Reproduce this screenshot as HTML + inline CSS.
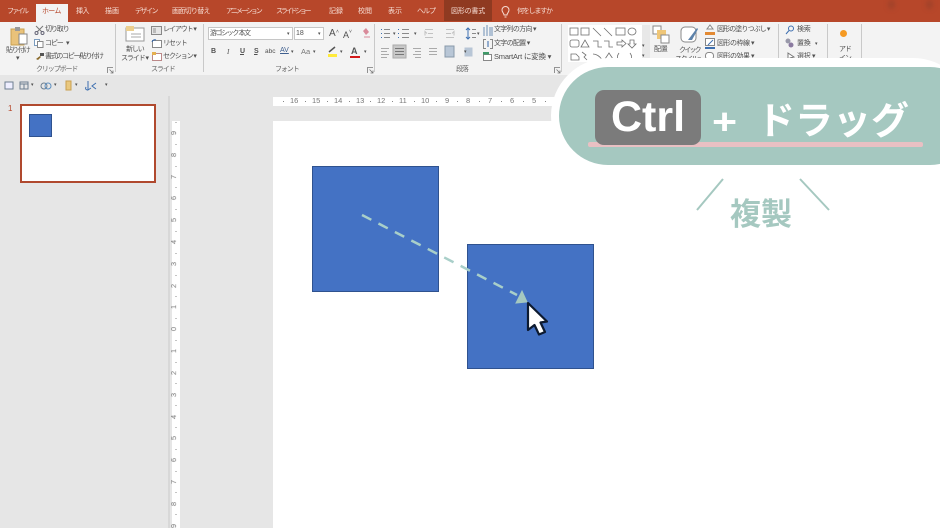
<!DOCTYPE html>
<html lang="ja"><head><meta charset="utf-8"><style>
html,body{margin:0;padding:0}
body{width:940px;height:528px;overflow:hidden;position:relative;background:#e6e6e6;font-family:"Liberation Sans","Noto Sans CJK JP",sans-serif}
div,span,svg{position:absolute}
.t{white-space:nowrap;font-size:7px;letter-spacing:-1.100px;line-height:10px;color:#505050;filter:blur(.3px)}
.l{letter-spacing:0}
.tab{color:#f6dcd3;top:7px}
.sep{width:1px;top:24px;height:48px;background:#c9c9c9}
.g{color:#666;top:65px;font-size:7px}
.r{color:#777;font-size:7.500px;line-height:8px;filter:blur(.3px)}
.o{white-space:nowrap;color:#fff;font-weight:bold}
</style></head><body>
<div style="left:0;top:0;width:940px;height:22px;background:#b7472a"></div>
<div style="left:36px;top:4px;width:32px;height:18px;background:#f3f3f3"></div>
<div style="left:444px;top:0;width:48px;height:21px;background:#8f3a21"></div>
<div style="left:0;top:22px;width:940px;height:53px;background:#f3f3f3"></div>
<div style="left:888px;top:0;width:7px;height:9px;background:#a3432a;border-radius:3px;filter:blur(2px)"></div>
<div style="left:926px;top:0;width:7px;height:9px;background:#a3432a;border-radius:3px;filter:blur(2px)"></div>

<span class="t tab" style="left:7px;letter-spacing:-2px">ファイル</span>
<span class="t tab" style="left:42px;color:#b7472a;letter-spacing:-.7px">ホーム</span>
<span class="t tab" style="left:76px;letter-spacing:-.5px">挿入</span>
<span class="t tab" style="left:105px;letter-spacing:0">描画</span>
<span class="t tab" style="left:135px;letter-spacing:-1.500px">デザイン</span>
<span class="t tab" style="left:172px;letter-spacing:-.7px">画面切り替え</span>
<span class="t tab" style="left:226px;letter-spacing:-2px">アニメーション</span>
<span class="t tab" style="left:276px;letter-spacing:-2.200px">スライド ショー</span>
<span class="t tab" style="left:329px;letter-spacing:0">記録</span>
<span class="t tab" style="left:358px;letter-spacing:0">校閲</span>
<span class="t tab" style="left:388px;letter-spacing:0">表示</span>
<span class="t tab" style="left:417px;letter-spacing:-1px">ヘルプ</span>
<span class="t tab" style="left:451px;letter-spacing:-.2px">図形の書式</span>
<span class="t tab" style="left:517px;letter-spacing:-1.200px">何をしますか</span>
<svg style="left:501px;top:6px" width="9" height="12" viewBox="0 0 9 12"><path d="M3 9C3 7 1 6.500 1 4a3.500 3.500 0 0 1 7 0C8 6.500 6 7 6 9ZM3.500 11h2" fill="none" stroke="#f6dcd3"/></svg>

<div class="sep" style="left:115px"></div><div class="sep" style="left:203px"></div><div class="sep" style="left:374px"></div><div class="sep" style="left:561px"></div><div class="sep" style="left:778px;height:36px"></div><div class="sep" style="left:827px;height:36px"></div><div class="sep" style="left:861px;height:36px"></div>

<!-- clipboard -->
<svg style="left:10px;top:26px" width="20" height="20" viewBox="0 0 20 20"><rect x="1" y="3" width="13" height="16" fill="#e9c27a" stroke="#c9a050"/><rect x="5" y="1" width="5" height="4" fill="#999"/><path d="M9 8h8v10H9z" fill="#fff" stroke="#888"/></svg>
<span class="t" style="left:6px;top:46px">貼り付け</span>
<span class="t" style="left:16px;top:54px">▾</span>
<svg style="left:34px;top:25px" width="11" height="10" viewBox="0 0 11 10"><path d="M2 1l6 6M9 1L3 7" stroke="#777" fill="none"/><circle cx="2.500" cy="8" r="1.500" fill="none" stroke="#667"/><circle cx="8.500" cy="8" r="1.500" fill="none" stroke="#667"/></svg>
<span class="t" style="left:45px;top:25px">切り取り</span>
<svg style="left:34px;top:39px" width="10" height="9" viewBox="0 0 10 9"><rect x=".5" y=".5" width="5" height="6" fill="#fff" stroke="#7a9cc0"/><rect x="3.500" y="2.500" width="5.500" height="6" fill="#fff" stroke="#888"/></svg>
<span class="t" style="left:45px;top:39px">コピー</span><span class="t" style="left:66px;top:39px">▾</span>
<svg style="left:35px;top:52px" width="10" height="9" viewBox="0 0 10 9"><path d="M1 7l4-3 1 1-3 3z" fill="#8a6a2a"/><rect x="5" y="1" width="4" height="3" fill="#555"/></svg>
<span class="t" style="left:45px;top:52px;letter-spacing:-1.300px">書式のコピー/貼り付け</span>
<span class="t g" style="left:36px">クリップボード</span>
<svg style="left:107px;top:67px" width="7" height="7" viewBox="0 0 7 7"><path d="M.5 6V.5H6M2.500 2.500L6 6M3.500 6H6V3.500" fill="none" stroke="#777" stroke-width=".8"/></svg>

<!-- slide group -->
<svg style="left:125px;top:25px" width="20" height="17" viewBox="0 0 20 17"><rect x="1" y="3" width="18" height="13" fill="#fff" stroke="#999"/><rect x="1" y="1" width="8" height="5" fill="#eccf8f"/><path d="M6 9h10M6 12h10" stroke="#aaa"/></svg>
<span class="t" style="left:126px;top:45px">新しい</span>
<span class="t" style="left:121px;top:54px">スライド ▾</span>
<svg style="left:151px;top:26px" width="11" height="9" viewBox="0 0 11 9"><rect x=".5" y=".5" width="10" height="8" fill="#e6e6e6" stroke="#888"/><rect x="2" y="2" width="3" height="5" fill="#bbb"/></svg>
<span class="t" style="left:163px;top:25px">レイアウト ▾</span>
<svg style="left:151px;top:39px" width="11" height="9" viewBox="0 0 11 9"><rect x="1.500" y="1.500" width="9" height="7" fill="#fff" stroke="#888"/><path d="M1 3a3 3 0 0 1 4-2" fill="none" stroke="#36a"/></svg>
<span class="t" style="left:163px;top:39px">リセット</span>
<svg style="left:152px;top:52px" width="10" height="9" viewBox="0 0 10 9"><rect x=".5" y="1.500" width="9" height="7" fill="#fff" stroke="#b88"/><rect x="0" y="0" width="4" height="3" fill="#e5b04f"/></svg>
<span class="t" style="left:163px;top:52px">セクション ▾</span>
<span class="t g" style="left:151px">スライド</span>

<!-- font -->
<div style="left:208px;top:27px;width:85px;height:13px;background:#fff;border:1px solid #c6c6c6;box-sizing:border-box"></div>
<span class="t" style="left:210px;top:29px;letter-spacing:-1.400px">游ゴシック 本文</span>
<span class="t" style="left:287px;top:29px;font-size:5px">▾</span>
<div style="left:294px;top:27px;width:30px;height:13px;background:#fff;border:1px solid #c6c6c6;box-sizing:border-box"></div>
<span class="t l" style="left:296px;top:29px">18</span>
<span class="t" style="left:318px;top:29px;font-size:5px">▾</span>
<span class="t" style="left:329px;top:29px;font-size:10px">A</span><span class="t" style="left:336px;top:27px;font-size:5px">˄</span>
<span class="t" style="left:343px;top:30px;font-size:9px">A</span><span class="t" style="left:349px;top:27px;font-size:5px">˅</span>
<svg style="left:361px;top:27px" width="10" height="12" viewBox="0 0 10 12"><path d="M2 4l3-3 3 4-3 3z" fill="#d98a9a"/><path d="M3 10h6" stroke="#d98a9a"/></svg>
<span class="t" style="left:211px;top:47px;font-weight:bold;font-family:'Liberation Sans'">B</span>
<span class="t" style="left:227px;top:47px;font-style:italic;font-family:'Liberation Serif'">I</span>
<span class="t" style="left:240px;top:47px;text-decoration:underline;font-weight:bold">U</span>
<span class="t" style="left:254px;top:47px;text-decoration:underline;font-weight:bold">S</span>
<span class="t l" style="left:265px;top:47px;font-size:6.500px">abc</span>
<span class="t l" style="left:280px;top:46px;color:#3f5f8f;text-decoration:underline">AV</span><span class="t" style="left:291px;top:47px;font-size:5px">▾</span>
<span class="t l" style="left:301px;top:47px;font-size:7.500px;color:#777">Aa</span><span class="t" style="left:313px;top:47px;font-size:5px">▾</span>
<svg style="left:327px;top:45px" width="11" height="13" viewBox="0 0 11 13"><path d="M2 7l6-5" stroke="#555" stroke-width="1.500"/><rect x="1" y="9" width="9" height="3" fill="#ffea3b"/></svg>
<span class="t" style="left:340px;top:47px;font-size:5px">▾</span>
<span class="t" style="left:351px;top:46px;font-size:9px;font-weight:bold;color:#555">A</span><div style="left:350px;top:56px;width:10px;height:2px;background:#d21818"></div>
<span class="t" style="left:364px;top:47px;font-size:5px">▾</span>
<span class="t g" style="left:275px">フォント</span>
<svg style="left:367px;top:67px" width="7" height="7" viewBox="0 0 7 7"><path d="M.5 6V.5H6M2.500 2.500L6 6M3.500 6H6V3.500" fill="none" stroke="#777" stroke-width=".8"/></svg>

<!-- paragraph -->
<svg style="left:380px;top:26px" width="180" height="34" viewBox="0 0 180 34" fill="none" stroke="#8a8a8a">
<path d="M1 3.500h1M1 7.500h1M1 11.500h1" stroke="#3d6fb0"/><path d="M4 3.500h6M4 7.500h6M4 11.500h6"/>
<path d="M18 3.500h1M18 7.500h1M18 11.500h1" stroke="#3d6fb0"/><path d="M22 3.500h7M22 7.500h7M22 11.500h7"/>
<path d="M45 3.500h8M48 7.500h5M45 11.500h8M47 7.500l-2-2v4" stroke="#c2c2c2"/>
<path d="M66 3.500h8M66 7.500h5M66 11.500h8M72 7.500l2-2v4" stroke="#c2c2c2"/>
<path d="M88 2v11M86 4l2-2 2 2M86 11l2 2 2-2" stroke="#3d6fb0"/><path d="M92 3.500h4M92 7.500h4M92 11.500h4"/>
<path d="M1 22.500h8M1 25.500h6M1 28.500h8M1 31.500h6" stroke="#aaa"/>
<rect x="13" y="19" width="13" height="13" fill="#c8c8c8" stroke="#aaa"/><path d="M15 22.500h9M15 25.500h9M15 28.500h9" stroke="#777"/>
<path d="M33 22.500h8M35 25.500h6M33 28.500h8M35 31.500h6" stroke="#aaa"/>
<path d="M49 22.500h8M49 25.500h8M49 28.500h8" stroke="#aaa"/>
<path d="M65 20h9v11h-9z" fill="#b8c6d6" stroke="#8899aa"/>
<path d="M85 22h7v8h-7z" fill="#b8c6d6" stroke="#b8c6d6"/>
</svg>
<span class="t" style="left:393px;top:29px;font-size:5px">▾</span><span class="t" style="left:414px;top:29px;font-size:5px">▾</span><span class="t" style="left:477px;top:29px;font-size:5px">▾</span><span class="t" style="left:464px;top:47px;font-size:5px">▾</span>
<svg style="left:483px;top:25px" width="10" height="11" viewBox="0 0 10 11" fill="none" stroke="#6d8fb5"><path d="M1 2v9M4 0v11M7 2v9M9 2v9"/></svg>
<span class="t" style="left:494px;top:25px;letter-spacing:-.7px">文字列の方向 ▾</span>
<svg style="left:483px;top:39px" width="10" height="10" viewBox="0 0 10 10" fill="none" stroke="#888"><path d="M3 .5H.5v9H3M7 .5h2.500v9H7"/><path d="M5 2v6" stroke="#36a"/></svg>
<span class="t" style="left:494px;top:39px;letter-spacing:-.7px">文字の配置 ▾</span>
<svg style="left:483px;top:51px" width="10" height="10" viewBox="0 0 10 10"><rect x=".5" y="3.500" width="8" height="6" fill="#fff" stroke="#888"/><rect x="0" y="1" width="6" height="2.500" fill="#3e9a68"/></svg>
<span class="t" style="left:494px;top:52px;font-size:7.500px;letter-spacing:-.2px">SmartArt に変換 ▾</span>
<span class="t g" style="left:456px">段落</span>
<svg style="left:554px;top:67px" width="7" height="7" viewBox="0 0 7 7"><path d="M.5 6V.5H6M2.500 2.500L6 6M3.500 6H6V3.500" fill="none" stroke="#777" stroke-width=".8"/></svg>

<!-- shapes -->
<div style="left:568px;top:25px;width:74px;height:37px;background:#fff"></div>
<svg style="left:568px;top:25px" width="74" height="37" viewBox="0 0 74 37" fill="none" stroke="#707070" stroke-width=".8">
<rect x="2" y="3" width="8" height="7"/><rect x="13" y="3" width="8" height="7"/><path d="M25 3l8 8M36 3l8 8"/><rect x="48" y="3" width="9" height="7"/><ellipse cx="64" cy="6.500" rx="4" ry="3.500"/>
<rect x="2" y="15" width="9" height="7" rx="2"/><path d="M13 22l4-7 4 7zM25 16h5v6h4M36 16h5v6h4M49 17h5v-2l4 3.500-4 3.500v-2h-5zM62 15h4v4h2l-4 4-4-4h2z"/>
<path d="M3 29h5l3 3v3H3zM14 27l4 3-2 2 3 3M25 29c3 0 7 2 9 6M37 34l4-6 4 6M51 28c-2 3-2 4-1 7M62 28c2 3 2 4 1 7"/></svg>
<div style="left:642px;top:25px;width:8px;height:37px;background:#e8e8e8"></div>
<span class="t" style="left:642px;top:41px;font-size:5px">▾</span><span class="t" style="left:642px;top:51px;font-size:5px">▾</span>

<svg style="left:652px;top:25px" width="20" height="20" viewBox="0 0 20 20"><rect x="1" y="1" width="8" height="8" fill="#fff" stroke="#888"/><rect x="5" y="5" width="9" height="9" fill="#efc677"/><rect x="9" y="10" width="8" height="8" fill="#fff" stroke="#888"/></svg>
<span class="t" style="left:654px;top:45px;letter-spacing:-.2px">配置</span>
<svg style="left:680px;top:25px" width="20" height="20" viewBox="0 0 20 20"><rect x="1" y="2" width="15" height="15" rx="4" fill="#fff" stroke="#888"/><path d="M8 15l9-12 1 1-6 11z" fill="#5d82aa"/></svg>
<span class="t" style="left:679px;top:46px;letter-spacing:-1.800px">クイック</span>
<span class="t" style="left:675px;top:55px;letter-spacing:-1.500px">スタイル ▾</span>
<svg style="left:705px;top:24px" width="11" height="11" viewBox="0 0 11 11"><path d="M5 1l3 4H2z" fill="#fff" stroke="#888"/><rect x="0" y="8" width="10" height="3" fill="#e38a33"/></svg>
<span class="t" style="left:717px;top:25px;letter-spacing:-.9px">図形の塗りつぶし ▾</span>
<svg style="left:705px;top:38px" width="11" height="11" viewBox="0 0 11 11"><rect x=".5" y=".5" width="9" height="7" fill="#fff" stroke="#888"/><path d="M3 7l5-5" stroke="#3d6fb0"/><rect x="0" y="9" width="10" height="2" fill="#3d6fb0"/></svg>
<span class="t" style="left:717px;top:39px;letter-spacing:-.5px">図形の枠線 ▾</span>
<svg style="left:705px;top:52px" width="11" height="9" viewBox="0 0 11 9"><rect x=".5" y=".5" width="8" height="7" rx="3" fill="#fff" stroke="#888"/></svg>
<span class="t" style="left:717px;top:52px;letter-spacing:-.5px">図形の効果 ▾</span>

<svg style="left:785px;top:25px" width="10" height="10" viewBox="0 0 10 10" fill="none" stroke="#3d6fb0"><circle cx="6" cy="3.500" r="2.500"/><path d="M4 5.500L1 9"/></svg>
<span class="t" style="left:797px;top:25px;letter-spacing:-.3px">検索</span>
<svg style="left:785px;top:38px" width="10" height="10" viewBox="0 0 10 10"><circle cx="3" cy="3" r="2.500" fill="#99a"/><circle cx="6" cy="7" r="2.500" fill="#8a7aa0"/></svg>
<span class="t" style="left:797px;top:39px;letter-spacing:-.3px">置換</span><span class="t" style="left:815px;top:39px;font-size:5px">▾</span>
<svg style="left:787px;top:52px" width="8" height="10" viewBox="0 0 8 10"><path d="M1 1v7l2-2 4-1z" fill="#fff" stroke="#777"/></svg>
<span class="t" style="left:797px;top:52px;letter-spacing:-.3px">選択 ▾</span>
<div style="left:840px;top:30px;width:7px;height:7px;border-radius:50%;background:#f59a23"></div>
<span class="t" style="left:839px;top:45px">アド</span><span class="t" style="left:839px;top:54px">イン</span>

<!-- quick access -->
<svg style="left:4px;top:79px" width="110" height="14" viewBox="0 0 110 14" fill="none" stroke="#6d7f90">
<rect x="1" y="3" width="8" height="7" fill="#eef"/>
<rect x="16" y="3" width="8" height="7"/><path d="M16 5h8M20 5v5"/>
<circle cx="40" cy="7" r="3"/><circle cx="44" cy="7" r="3" stroke="#5d8fc0"/>
<rect x="62" y="2" width="5" height="9" fill="#e9c87f" stroke="#c9a050"/>
<path d="M84 2v9l3-2M84 11c-2 0-3-1-2-3M92 4l-4 3 4 3" stroke="#3d6fb0"/>
</svg>
<span class="t" style="left:31px;top:80px;font-size:5px">▾</span><span class="t" style="left:54px;top:80px;font-size:5px">▾</span><span class="t" style="left:75px;top:80px;font-size:5px">▾</span><span class="t" style="left:105px;top:80px;font-size:5px">▾</span>

<!-- thumbnail pane -->
<div style="left:168px;top:96px;width:2px;height:432px;background:#d8d8d8"></div>
<span class="t" style="left:8px;top:104px;font-size:8px;color:#b7472a">1</span>
<div style="left:20px;top:104px;width:136px;height:79px;box-sizing:border-box;border:2px solid #b0492e;background:#fff"></div>
<div style="left:29px;top:114px;width:23px;height:23px;box-sizing:border-box;background:#4472c4;border:1px solid #2f528f"></div>

<!-- rulers -->
<div style="left:273px;top:97px;width:290px;height:9px;background:#fff"></div>
<div style="left:172px;top:121px;width:8px;height:407px;background:#fff"></div>
<span class="r" style="left:290px;top:97px">16</span><span class="r" style="left:312px;top:97px">15</span><span class="r" style="left:334px;top:97px">14</span><span class="r" style="left:356px;top:97px">13</span><span class="r" style="left:377px;top:97px">12</span><span class="r" style="left:399px;top:97px">11</span><span class="r" style="left:421px;top:97px">10</span><span class="r" style="left:445px;top:97px">9</span><span class="r" style="left:466px;top:97px">8</span><span class="r" style="left:488px;top:97px">7</span><span class="r" style="left:510px;top:97px">6</span><span class="r" style="left:532px;top:97px">5</span>
<svg style="left:273px;top:97px" width="290" height="9"><path d="M10 4.500h1M32 4.500h1M54 4.500h1M76 4.500h1M97 4.500h1M119 4.500h1M141 4.500h1M163 4.500h1M184 4.500h1M206 4.500h1M228 4.500h1M250 4.500h1M272 4.500h1" stroke="#888"/></svg>
<svg style="left:172px;top:121px" width="8" height="407"><path d="M4 1v1M4 23v1M4 45v1M4 66v1M4 88v1M4 110v1M4 132v1M4 154v1M4 175v1M4 197v1M4 219v1M4 241v1M4 262v1M4 284v1M4 306v1M4 328v1M4 350v1M4 371v1M4 393v1" stroke="#888"/></svg>
<span class="r" style="left:172px;top:129px;transform:rotate(-90deg)">9</span><span class="r" style="left:172px;top:151px;transform:rotate(-90deg)">8</span><span class="r" style="left:172px;top:173px;transform:rotate(-90deg)">7</span><span class="r" style="left:172px;top:194px;transform:rotate(-90deg)">6</span><span class="r" style="left:172px;top:216px;transform:rotate(-90deg)">5</span><span class="r" style="left:172px;top:238px;transform:rotate(-90deg)">4</span><span class="r" style="left:172px;top:260px;transform:rotate(-90deg)">3</span><span class="r" style="left:172px;top:282px;transform:rotate(-90deg)">2</span><span class="r" style="left:172px;top:303px;transform:rotate(-90deg)">1</span><span class="r" style="left:172px;top:325px;transform:rotate(-90deg)">0</span><span class="r" style="left:172px;top:347px;transform:rotate(-90deg)">1</span><span class="r" style="left:172px;top:369px;transform:rotate(-90deg)">2</span><span class="r" style="left:172px;top:391px;transform:rotate(-90deg)">3</span><span class="r" style="left:172px;top:413px;transform:rotate(-90deg)">4</span><span class="r" style="left:172px;top:434px;transform:rotate(-90deg)">5</span><span class="r" style="left:172px;top:456px;transform:rotate(-90deg)">6</span><span class="r" style="left:172px;top:478px;transform:rotate(-90deg)">7</span><span class="r" style="left:172px;top:500px;transform:rotate(-90deg)">8</span><span class="r" style="left:172px;top:522px;transform:rotate(-90deg)">9</span>

<!-- slide -->
<div style="left:273px;top:121px;width:667px;height:407px;background:#fff"></div>
<div style="left:312px;top:166px;width:126.500px;height:126px;box-sizing:border-box;background:#4472c4;border:1px solid #2f528f"></div>
<div style="left:467px;top:243.500px;width:126.500px;height:125.500px;box-sizing:border-box;background:#4472c4;border:1px solid #2f528f"></div>
<svg style="left:0;top:0" width="940" height="528">
<path d="M362 215L517 295" stroke="#a9cfc9" stroke-width="2.500" stroke-dasharray="10.500 8" fill="none"/>
<path d="M527 302L522 291L516 303Z" fill="#a5c8c0" stroke="#a5c8c0" stroke-width="1"/>
<path d="M528 303V330L534.500 325L539 334.500L545 332L540.500 322.500L547 321.500Z" fill="#fff" stroke="#0d1a30" stroke-width="2.200" stroke-linejoin="round"/>
</svg>

<!-- overlay -->
<div style="left:551px;top:58px;width:420px;height:116px;background:#fff;border-radius:58px"></div>
<div style="left:559px;top:67px;width:420px;height:98px;background:#a5c8c0;border-radius:49px"></div>
<div style="left:588px;top:142px;width:335px;height:5px;background:#e9c0c3;border-radius:2px"></div>
<div style="left:595px;top:90px;width:106px;height:55px;background:#7b7b7b;border-radius:9px"></div>
<span class="o" style="left:611px;top:92px;font-size:43px;line-height:50px">Ctrl</span>
<span class="o" style="left:712px;top:94px;font-size:43px;line-height:56px;transform:scaleY(.85)">+</span>
<span class="o" style="left:757px;top:90px;font-size:38px;line-height:56px;font-family:'Noto Sans CJK JP',sans-serif">ドラッグ</span>
<svg style="left:0;top:0" width="940" height="528"><path d="M723 179L697 210M800 179L829 210" stroke="#a5c8c0" stroke-width="2" fill="none"/></svg>
<span class="o" style="left:730px;top:193px;font-size:31px;line-height:38px;color:#a5c8c0;font-family:'Noto Sans CJK JP',sans-serif">複製</span>
</body></html>
